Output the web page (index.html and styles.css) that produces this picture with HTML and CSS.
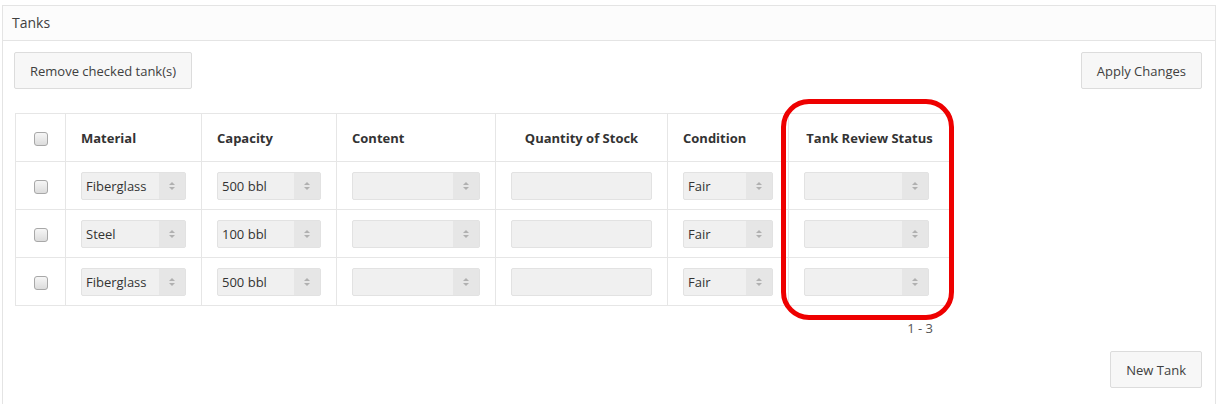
FILE: index.html
```html
<!DOCTYPE html>
<html lang="en">
<head>
  <meta charset="UTF-8" />
  <title>Tanks</title>
  <link rel="stylesheet" href="styles.css">
</head>
<body>

  <div class="panel">
    <div class="panel-header">Tanks</div>

    <div class="panel-body">
      <div class="toolbar">
        <button class="btn">Remove checked tank(s)</button>
        <button class="btn">Apply Changes</button>
      </div>

      <div class="grid-wrap">
        <table class="tanks">
          <colgroup>
            <col class="c-check">
            <col class="c-material">
            <col class="c-capacity">
            <col class="c-content">
            <col class="c-qty">
            <col class="c-cond">
            <col class="c-review">
          </colgroup>
          <thead>
            <tr>
              <th class="col-check"><span class="check"></span></th>
              <th>Material</th>
              <th>Capacity</th>
              <th>Content</th>
              <th class="center">Quantity of Stock</th>
              <th>Condition</th>
              <th class="center">Tank Review Status</th>
            </tr>
          </thead>
          <tbody>
            <tr>
              <td class="col-check"><span class="check"></span></td>
              <td><div class="sel"><span>Fiberglass</span><i class="arrow"></i></div></td>
              <td><div class="sel"><span>500 bbl</span><i class="arrow"></i></div></td>
              <td><div class="sel"><span></span><i class="arrow"></i></div></td>
              <td><div class="txt"></div></td>
              <td><div class="sel"><span>Fair</span><i class="arrow"></i></div></td>
              <td class="col-review"><div class="sel"><span></span><i class="arrow"></i></div></td>
            </tr>
            <tr>
              <td class="col-check"><span class="check"></span></td>
              <td><div class="sel"><span>Steel</span><i class="arrow"></i></div></td>
              <td><div class="sel"><span>100 bbl</span><i class="arrow"></i></div></td>
              <td><div class="sel"><span></span><i class="arrow"></i></div></td>
              <td><div class="txt"></div></td>
              <td><div class="sel"><span>Fair</span><i class="arrow"></i></div></td>
              <td class="col-review"><div class="sel"><span></span><i class="arrow"></i></div></td>
            </tr>
            <tr>
              <td class="col-check"><span class="check"></span></td>
              <td><div class="sel"><span>Fiberglass</span><i class="arrow"></i></div></td>
              <td><div class="sel"><span>500 bbl</span><i class="arrow"></i></div></td>
              <td><div class="sel"><span></span><i class="arrow"></i></div></td>
              <td><div class="txt"></div></td>
              <td><div class="sel"><span>Fair</span><i class="arrow"></i></div></td>
              <td class="col-review"><div class="sel"><span></span><i class="arrow"></i></div></td>
            </tr>
          </tbody>
        </table>

        <div class="pager">1 - 3</div>

        <!-- annotation around the review status column -->
        <div class="highlight"></div>
      </div>

      <div class="footer">
        <button class="btn">New Tank</button>
      </div>
    </div>
  </div>

</body>
</html>
```

FILE: styles.css
```css
body {
  margin: 0;
  background-color: #ffffff;
  color: #333333;
  font-family: "Open Sans", Arial, sans-serif;
  font-size: 13px;
}
.panel {
  margin: 5px 2px 0 2px;
  border: 1px solid #e4e4e4;
  border-bottom: none;
  height: 399px;
  box-sizing: border-box;
}
.panel-header {
  height: 34px;
  line-height: 34px;
  padding: 0 9px;
  font-size: 14px;
  color: #404040;
  background-color: #fcfcfc;
  border-bottom: 1px solid #e4e4e4;
}
.panel-body {
  padding: 11px 13px 0 11px;
}
.toolbar {
  display: flex;
  justify-content: space-between;
}
.btn {
  height: 37px;
  padding: 0 15px;
  font-family: inherit;
  font-size: 13px;
  color: #404040;
  background-color: #f7f7f7;
  border: 1px solid #dcdcdc;
  border-radius: 2px;
  cursor: pointer;
}
.grid-wrap {
  position: relative;
  margin-top: 24px;
  width: 935px;
  margin-left: 1px;
}
.tanks {
  border-collapse: collapse;
  width: 935px;
  table-layout: fixed;
  border: 1px solid #e6e6e6;
}
.c-check { width: 50px; }
.c-material { width: 136px; }
.c-capacity { width: 135px; }
.c-content { width: 159px; }
.c-qty { width: 172px; }
.c-cond { width: 121px; }
.c-review { width: 162px; }
.tanks th,
.tanks td {
  border: 1px solid #e6e6e6;
  padding: 0 15px;
  height: 47px;
  text-align: left;
  white-space: nowrap;
}
.tanks th {
  font-weight: bold;
  color: #333333;
}
.tanks .center {
  text-align: center;
}
.tanks .col-check {
  padding: 0;
  text-align: center;
}
.tanks td.col-review {
  padding-right: 21px;
}
.check {
  display: inline-block;
  width: 12px;
  height: 12px;
  border: 1px solid #a8a8a8;
  border-radius: 3px;
  background: linear-gradient(#f6f6f6, #dcdcdc);
  vertical-align: middle;
}
.sel {
  display: flex;
  height: 28px;
  background-color: #f0f0f0;
  border: 1px solid #e2e2e2;
  border-radius: 2px;
  box-sizing: border-box;
}
.sel span {
  flex: 1;
  line-height: 26px;
  padding-left: 4px;
  color: #333333;
  white-space: nowrap;
  overflow: hidden;
}
.sel .arrow {
  width: 26px;
  background-color: #e6e6e6;
  position: relative;
}
.sel .arrow::before,
.sel .arrow::after {
  content: "";
  position: absolute;
  left: 10px;
  border-left: 3px solid transparent;
  border-right: 3px solid transparent;
}
.sel .arrow::before {
  top: 9px;
  border-bottom: 3px solid #b0b0b0;
}
.sel .arrow::after {
  top: 14px;
  border-top: 3px solid #b0b0b0;
}
.txt {
  height: 28px;
  background-color: #f0f0f0;
  border: 1px solid #e2e2e2;
  border-radius: 2px;
  box-sizing: border-box;
}
.pager {
  text-align: right;
  padding-right: 17px;
  margin-top: 13px;
  color: #555555;
}
.highlight {
  position: absolute;
  left: 766px;
  top: -14px;
  width: 173px;
  height: 221px;
  box-sizing: border-box;
  border: 5px solid #ee0000;
  border-radius: 28px;
}
.footer {
  display: flex;
  justify-content: flex-end;
  margin-top: 14px;
}
```
